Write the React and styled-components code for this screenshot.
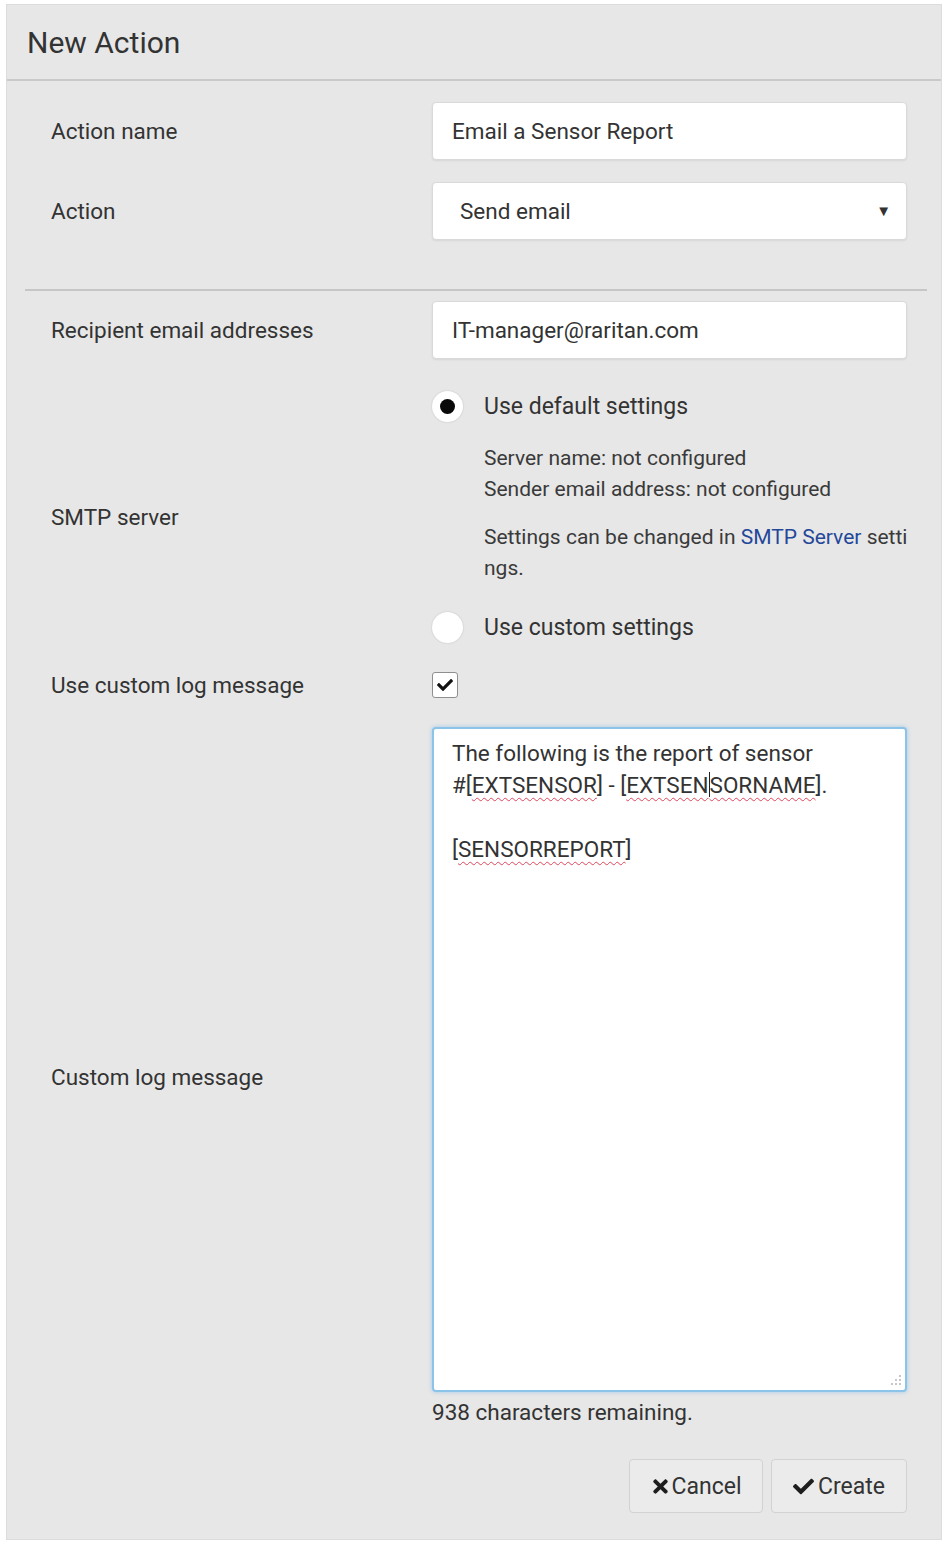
import React from 'react';
import styled, { createGlobalStyle } from 'styled-components';
import { FaTimes, FaCheck } from 'react-icons/fa';

const GlobalStyle = createGlobalStyle`
  html, body {
    margin: 0;
    padding: 0;
    background: #ffffff;
  }
  body {
    font-family: Roboto, "Noto Sans", "Liberation Sans", sans-serif;
    color: #333333;
  }
`;

const Panel = styled.div`
  box-sizing: border-box;
  margin: 4px 0 0 6px;
  width: 936px;
  height: 1536px;
  background: #e7e7e7;
  border: 1px solid #dcdcdc;
  display: flex;
  flex-direction: column;
`;

const PanelHeader = styled.header`
  box-sizing: border-box;
  height: 76px;
  padding: 0 20px;
  display: flex;
  align-items: center;
  font-size: 30px;
  color: #333;
  border-bottom: 2px solid #c9c9c9;
`;

const FormSection = styled.section`
  display: flex;
  flex-direction: column;
  padding: ${(p) => p.$padding || '0'};
  margin: 0 14px 0 18px;
  border-bottom: ${(p) => (p.$divider ? '2px solid #c6c6c6' : 'none')};
`;

const Row = styled.div`
  display: grid;
  grid-template-columns: 381px 1fr;
  align-items: center;
  padding: 0 20px 0 26px;
  margin-top: ${(p) => p.$top || 0}px;
`;

const Label = styled.div`
  font-size: 22.5px;
  color: #333;
`;

const TextInput = styled.div`
  box-sizing: border-box;
  height: 58px;
  padding: 0 ${(p) => (p.$select ? '27px' : '19px')};
  background: #fff;
  border: 1px solid #d9d9d9;
  border-radius: 4px;
  box-shadow: 0 1px 2px rgba(0, 0, 0, 0.08);
  display: flex;
  align-items: center;
  justify-content: space-between;
  font-size: 22.5px;
  color: #333;
`;

const Caret = styled.span`
  font-size: 15px;
  color: #333;
  margin-right: -12px;
`;

const RadioGroup = styled.div`
  display: flex;
  flex-direction: column;
`;

const RadioOption = styled.div`
  display: flex;
  align-items: center;
  gap: 21px;
  height: 32px;
  margin-top: ${(p) => p.$top || 0}px;
  font-size: 23px;
  color: #333;
`;

const RadioCircle = styled.span`
  box-sizing: border-box;
  width: 31px;
  height: 31px;
  border-radius: 50%;
  background: #fff;
  box-shadow: 0 0 2px rgba(0, 0, 0, 0.18);
  display: flex;
  align-items: center;
  justify-content: center;

  &::after {
    content: '';
    width: 15px;
    height: 15px;
    border-radius: 50%;
    background: ${(p) => (p.$checked ? '#0a0a0a' : 'transparent')};
  }
`;

const Help = styled.div`
  padding-left: 52px;
  font-size: 21px;
  line-height: 31px;
  color: #3a3a3a;
  white-space: nowrap;
  margin-top: ${(p) => p.$top || 0}px;
`;

const Link = styled.a`
  color: #24479a;
  text-decoration: none;
`;

const CheckBox = styled.span`
  box-sizing: border-box;
  width: 26px;
  height: 26px;
  border: 1px solid #8f8f8f;
  border-radius: 3px;
  background: #fff;
  display: flex;
  align-items: center;
  justify-content: center;
  color: #111;
  font-size: 16px;
`;

const FieldColumn = styled.div`
  display: flex;
  flex-direction: column;
`;

const TextArea = styled.div`
  position: relative;
  box-sizing: border-box;
  height: 665px;
  padding: 8px 18px;
  background: #fff;
  border: 2px solid #8cc3e8;
  border-radius: 4px;
  box-shadow: 0 0 4px rgba(102, 175, 233, 0.55);
  font-size: 22.5px;
  line-height: 32px;
  color: #333;
  white-space: nowrap;
`;

const Misspelled = styled.span`
  text-decoration: underline wavy #e0455a;
  text-decoration-thickness: 1px;
  text-underline-offset: 4px;
`;

const TextCursor = styled.span`
  display: inline-block;
  width: 1px;
  height: 25px;
  background: #222;
  vertical-align: -4px;
`;

const ResizeGrip = styled.svg`
  position: absolute;
  right: 3px;
  bottom: 3px;
`;

const Counter = styled.div`
  font-size: 22.5px;
  line-height: 28px;
  color: #333;
  margin-top: 6px;
`;

const Footer = styled.div`
  display: flex;
  justify-content: flex-end;
  gap: 8px;
  padding: 0 34px 0 0;
  margin-top: 33px;
`;

const Button = styled.button`
  box-sizing: border-box;
  width: ${(p) => p.$width}px;
  height: 54px;
  display: flex;
  align-items: center;
  justify-content: center;
  gap: ${(p) => p.$gap || 0}px;
  background: #ebebeb;
  border: 1px solid #d2d2d2;
  border-radius: 4px;
  font-family: inherit;
  font-size: 23px;
  color: #333;
  cursor: pointer;

  & svg {
    color: #1e1e1e;
    font-size: 21px;
  }
`;

export default function App() {
  return (
    <>
      <GlobalStyle />
      <Panel>
        <PanelHeader>New Action</PanelHeader>

        <FormSection $divider $padding="21px 0 49px">
          <Row>
            <Label>Action name</Label>
            <TextInput>Email a Sensor Report</TextInput>
          </Row>
          <Row $top={22}>
            <Label>Action</Label>
            <TextInput $select>
              Send email
              <Caret>▼</Caret>
            </TextInput>
          </Row>
        </FormSection>

        <FormSection $padding="10px 0 0">
          <Row>
            <Label>Recipient email addresses</Label>
            <TextInput>IT-manager@raritan.com</TextInput>
          </Row>

          <Row $top={31}>
            <Label>SMTP server</Label>
            <RadioGroup>
              <RadioOption>
                <RadioCircle $checked />
                Use default settings
              </RadioOption>
              <Help $top={21}>
                Server name: not configured
                <br />
                Sender email address: not configured
              </Help>
              <Help $top={17}>
                Settings can be changed in <Link href="#smtp">SMTP Server</Link> setti
                <br />
                ngs.
              </Help>
              <RadioOption $top={27}>
                <RadioCircle />
                Use custom settings
              </RadioOption>
            </RadioGroup>
          </Row>

          <Row $top={29}>
            <Label>Use custom log message</Label>
            <CheckBox>
              <FaCheck />
            </CheckBox>
          </Row>

          <Row $top={29}>
            <Label>Custom log message</Label>
            <FieldColumn>
              <TextArea role="textbox">
                The following is the report of sensor
                <br />
                #[<Misspelled>EXTSENSOR</Misspelled>] - [<Misspelled>EXTSEN</Misspelled>
                <TextCursor />
                <Misspelled>SORNAME</Misspelled>].
                <br />
                <br />
                [<Misspelled>SENSORREPORT</Misspelled>]
                <ResizeGrip width="14" height="14" viewBox="0 0 14 14">
                  <g fill="#b5b5b5">
                    <circle cx="12" cy="3" r="1" />
                    <circle cx="12" cy="7" r="1" />
                    <circle cx="8" cy="7" r="1" />
                    <circle cx="12" cy="11" r="1" />
                    <circle cx="8" cy="11" r="1" />
                    <circle cx="4" cy="11" r="1" />
                  </g>
                </ResizeGrip>
              </TextArea>
              <Counter>938 characters remaining.</Counter>
            </FieldColumn>
          </Row>
        </FormSection>

        <Footer>
          <Button $width={134}>
            <FaTimes />
            Cancel
          </Button>
          <Button $width={136} $gap={4}>
            <FaCheck />
            Create
          </Button>
        </Footer>
      </Panel>
    </>
  );
}
